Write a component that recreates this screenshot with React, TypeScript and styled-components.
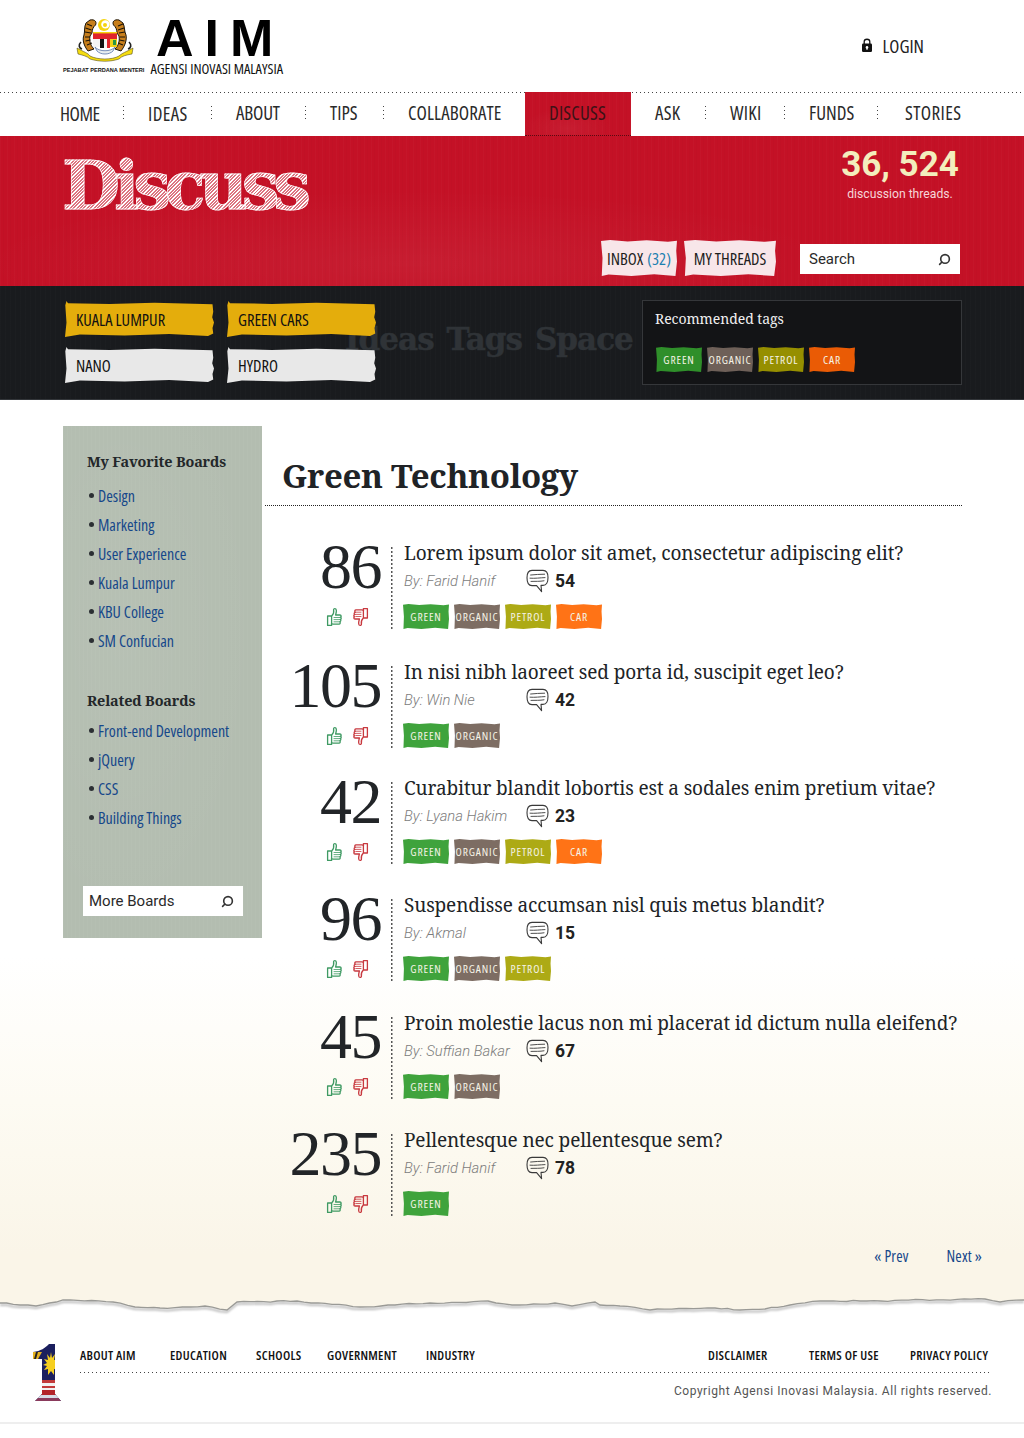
import React from 'react';
import styled, { createGlobalStyle, css } from 'styled-components';
import { Search as SearchGlyph } from 'lucide-react';

const narrow = `"Open Sans","Liberation Sans",sans-serif`;
const plain = `Roboto,"Liberation Sans",sans-serif`;
const serif = `"Noto Serif","Liberation Serif",serif`;

const Global = createGlobalStyle`
  html, body { margin: 0; padding: 0; background: #fff; }
  body { font-family: ${plain}; color: #222; }
  a { text-decoration: none; color: inherit; }
  ul { list-style: none; margin: 0; padding: 0; }
  * { box-sizing: border-box; }
`;

const condensed = css`
  font-family: ${narrow};
  font-stretch: 75%;
`;
const rough = css`
  clip-path: polygon(0 3%, 12% 0, 35% 4%, 60% 1%, 88% 5%, 100% 2%, 99% 30%, 100% 60%, 98% 100%, 70% 95%, 40% 100%, 10% 96%, 1% 100%, 2% 50%);
`;
const brush = css`
  clip-path: polygon(1% 0, 2% 6%, 30% 8%, 60% 5%, 99% 9%, 99.5% 30%, 98.8% 45%, 100% 60%, 99% 75%, 99.5% 90%, 96% 97%, 70% 92%, 40% 96%, 10% 93%, 3% 98%, 0 100%, 1% 60%, .5% 30%, .2% 12%);
`;
const paper = css`
  background-image:
    repeating-linear-gradient(90deg, rgba(255,255,255,.018) 0 1px, transparent 1px 3px, rgba(0,0,0,.015) 3px 4px, transparent 4px 7px),
    radial-gradient(ellipse 60% 70% at 40% 85%, rgba(255,255,255,.05), transparent 70%);
`;

const Page = styled.div`
  width: 1024px;
  height: 1438px;
  overflow: hidden;
  background: #fff;
`;

/* ---------- header ---------- */
const Header = styled.header`
  height: 92px;
  display: flex;
  justify-content: space-between;
  align-items: center;
  padding: 0 100px 0 63px;
`;
const Logo = styled.div`
  display: flex;
  flex-direction: column;
  width: 220px;
`;
const LogoTop = styled.div`
  display: flex;
  align-items: flex-start;
  height: 47px;
`;
const Crest = styled.svg`
  width: 58px;
  height: 44px;
  margin: 2px 0 0 13px;
  flex: none;
`;
const Wordmark = styled.div`
  font-family: "Liberation Sans", sans-serif;
  font-weight: 700;
  font-size: 52px;
  line-height: 46px;
  letter-spacing: 11px;
  color: #000;
  margin: -1px 0 0 22px;
  white-space: nowrap;
`;
const LogoBottom = styled.div`
  display: flex;
  align-items: center;
  justify-content: space-between;
  white-space: nowrap;
  color: #111;
`;
const Office = styled.span`
  font-family: "Liberation Sans", sans-serif;
  font-size: 5.6px;
  font-weight: 700;
`;
const Agency = styled.span`
  ${condensed};
  font-size: 14.4px;
  line-height: 16px;
  margin-top: -2px;
`;
const Login = styled.a`
  ${condensed};
  display: flex;
  align-items: center;
  gap: 11px;
  font-size: 18.5px;
  color: #222;
  margin-bottom: 2px;
`;
const Lock = styled.svg`
  width: 10px;
  height: 14px;
`;

/* ---------- nav ---------- */
const WideDots = styled.div`
  height: 1px;
  background-image: repeating-linear-gradient(90deg, #444 0 1px, transparent 1px 4px);
`;
const Nav = styled.nav`
  height: 43px;
  display: flex;
  align-items: center;
  padding: 0 0 4px 36px;
  white-space: nowrap;
`;
const NavLink = styled.a<{ $w: number; $low?: boolean; $track?: number; $start?: number }>`
  ${condensed};
  flex: none;
  width: ${p => p.$w}px;
  font-size: 19px;
  letter-spacing: ${p => p.$track ?? 0}px;
  color: #2a2a2a;
  padding: ${p => (p.$low ? '2px' : '0')} 0 0 ${p => p.$start ?? 24}px;
`;
const ActiveLink = styled.a`
  ${condensed};
  flex: none;
  width: 106px;
  font-size: 19px;
  letter-spacing: .2px;
  color: #3d1216;
  align-self: flex-start;
  margin-top: -1px;
  height: 44px;
  display: flex;
  align-items: center;
  padding: 0 0 2px 24px;
  background-color: #c41126;
  border-bottom: 1px dotted #5a0a12;
  ${paper};
`;
const NavSep = styled.span`
  width: 1px;
  height: 14px;
  flex: none;
  background-image: repeating-linear-gradient(180deg, #444 0 1px, transparent 1px 4px);
`;

/* ---------- hero ---------- */
const Hero = styled.section`
  height: 150px;
  background-color: #c41126;
  ${paper};
  display: flex;
  justify-content: space-between;
  padding: 0 64px 0 62px;
`;
const HeroTitle = styled.h1`
  margin: 10px 0 0;
  font-family: "DejaVu Serif", serif;
  font-weight: 700;
  font-size: 67px;
  line-height: 80px;
  letter-spacing: -6.2px;
  height: 80px;
  padding: 0 8px 0 0;
  color: transparent;
  -webkit-text-stroke: .8px rgba(255,255,255,.75);
  background-image: repeating-linear-gradient(135deg, #fff 0 1px, rgba(255,255,255,.42) 1px 2.4px);
  -webkit-background-clip: text;
  background-clip: text;
`;
const HeroRight = styled.div`
  display: flex;
  flex-direction: column;
  align-items: flex-end;
`;
const Stats = styled.div`
  width: 120px;
  display: flex;
  flex-direction: column;
  align-items: center;
  white-space: nowrap;
  height: 104px;
`;
const StatNumber = styled.div`
  font-family: ${plain};
  font-weight: 700;
  font-size: 35px;
  line-height: 40px;
  margin-top: 9px;
  color: #f3eebd;
`;
const StatLabel = styled.div`
  font-family: ${plain};
  font-size: 12.2px;
  line-height: 16px;
  margin-top: 1px;
  color: #f6d6d8;
`;
const Actions = styled.div`
  display: flex;
  align-items: center;
`;
const PaperButton = styled.a<{ $w: number }>`
  ${condensed};
  ${rough};
  width: ${p => p.$w}px;
  height: 36px;
  margin: 0 7px 2px 0;
  display: flex;
  align-items: center;
  justify-content: center;
  font-size: 16.5px;
  white-space: nowrap;
  color: #1d1d1d;
  background: #f8e6e9;
`;
const InboxCount = styled.span`
  color: #1c7fb0;
  margin-left: 4px;
`;
const SearchBox = styled.div<{ $left?: number }>`
  width: 160px;
  height: 30px;
  background: #fff;
  display: flex;
  align-items: center;
  justify-content: space-between;
  padding: 0 9px 0 ${p => p.$left ?? 9}px;
  margin-left: ${p => (p.$left ? 0 : 17)}px;
  font-family: ${plain};
  font-size: 15px;
  color: #2a2a2a;
`;
const SearchIcon = styled(SearchGlyph)`
  width: 13px;
  height: 13px;
  transform: scaleX(-1);
  color: #333;
`;

/* ---------- dark band ---------- */
const Band = styled.section`
  position: relative;
  height: 114px;
  background-color: #191b1e;
  background-image: repeating-linear-gradient(90deg, rgba(255,255,255,.012) 0 1px, transparent 1px 5px);
  border-bottom: 1px solid #33363a;
  display: flex;
  justify-content: space-between;
  padding: 14px 62px 0 65px;
`;
const Ghost = styled.div`
  position: absolute;
  left: 345px;
  top: 31px;
  font-family: "DejaVu Serif", serif;
  font-weight: 700;
  font-size: 31px;
  line-height: 44px;
  letter-spacing: -.95px;
  word-spacing: 3px;
  color: #2f3337;
  -webkit-text-stroke: .5px #2f3337;
  white-space: nowrap;
`;
const BrushGrid = styled.div`
  position: relative;
  display: grid;
  grid-template-columns: 149px 149px;
  grid-auto-rows: 36px;
  column-gap: 13px;
  row-gap: 10px;
  margin-top: 1px;
  height: 82px;
`;
const BrushTag = styled.a<{ $active?: boolean }>`
  ${condensed};
  ${brush};
  display: flex;
  align-items: center;
  padding-left: 11px;
  font-size: 16.5px;
  color: #111;
  background: ${p => (p.$active ? '#e4ad0c' : '#e8e8e8')};
`;
const RecBox = styled.div`
  position: relative;
  width: 320px;
  height: 85px;
  border: 1px solid #35373a;
  background: #131416;
  padding: 7px 13px 0 12px;
`;
const RecTitle = styled.div`
  font-family: ${serif};
  font-size: 14px;
  line-height: 22px;
  letter-spacing: -.05px;
  color: #f0f0f0;
`;
const tagColors: Record<string, [string, string]> = {
  GREEN: ['#3fa33c', '#2f8f2a'],
  ORGANIC: ['#7d6d63', '#6e6058'],
  PETROL: ['#adaa15', '#968f00'],
  CAR: ['#ff7316', '#ea5b05'],
};
const TagRow = styled.div<{ $top: number; $left: number }>`
  display: flex;
  gap: 5px;
  margin: ${p => p.$top}px 0 0 ${p => p.$left}px;
`;
const Tag = styled.a<{ $name: string; $dim?: boolean }>`
  ${condensed};
  ${rough};
  width: 46px;
  height: 25px;
  display: flex;
  align-items: center;
  justify-content: center;
  font-size: 11.5px;
  letter-spacing: .85px;
  color: #f5f3e6;
  white-space: nowrap;
  background: ${p => tagColors[p.$name][p.$dim ? 1 : 0]};
`;

/* ---------- main ---------- */
const Main = styled.main`
  height: 898px;
  padding: 26px 0 0 63px;
  display: flex;
  align-items: flex-start;
  background: linear-gradient(#fff 0, #fff 62%, #fdfbf3 78%, #faf5e8 95%);
`;
const Sidebar = styled.aside`
  width: 199px;
  height: 512px;
  flex: none;
  padding: 24px 19px 0 24px;
  background-color: #b3bdb0;
  background-image:
    repeating-linear-gradient(90deg, rgba(255,255,255,.03) 0 1px, transparent 1px 4px),
    radial-gradient(ellipse at 30% 40%, rgba(255,255,255,.05), transparent 70%);
  display: flex;
  flex-direction: column;
`;
const SideTitle = styled.h3<{ $top?: number }>`
  margin: ${p => p.$top ?? 0}px 0 0;
  font-family: ${serif};
  font-weight: 700;
  font-size: 14.4px;
  line-height: 24px;
  letter-spacing: -.15px;
  white-space: nowrap;
  color: #23272a;
`;
const SideList = styled.ul<{ $top?: number }>`
  margin-top: ${p => p.$top ?? 7}px;
`;
const SideItem = styled.li`
  ${condensed};
  height: 29px;
  display: flex;
  align-items: center;
  gap: 4px;
  font-size: 16px;
  color: #15478a;
  white-space: nowrap;
  &::before {
    content: '';
    width: 5px;
    height: 5px;
    margin-left: 2px;
    border-radius: 50%;
    background: #2b2f33;
  }
`;
const SideSearch = styled.div`
  margin: auto 0 22px -4px;
`;
const Content = styled.div`
  width: 697px;
  margin-left: 3px;
  flex: none;
`;
const Heading = styled.h2`
  margin: 0;
  height: 80px;
  padding: 26px 0 0 17px;
  border-bottom: 1px dotted #222;
  font-family: ${serif};
  font-weight: 700;
  font-size: 33px;
  line-height: 48px;
  letter-spacing: -.35px;
  color: #202326;
  white-space: nowrap;
`;
const Threads = styled.div`
  padding-top: 34px;
`;
const Thread = styled.article<{ $h: number }>`
  height: ${p => p.$h}px;
  display: grid;
  grid-template-columns: 126px 1fr;
  align-items: start;
`;
const VoteCol = styled.div`
  display: flex;
  flex-direction: column;
  align-items: flex-end;
`;
const Score = styled.div`
  font-family: "Liberation Serif", serif;
  font-size: 64px;
  line-height: 56px;
  letter-spacing: -1.5px;
  margin: -1px 10px 0 0;
  height: 68px;
  color: #222528;
  white-space: nowrap;
`;
const Votes = styled.div`
  display: flex;
  gap: 9px;
  padding-right: 22px;
`;
const Vote = styled.svg`
  width: 17px;
  height: 20px;
`;
const Body = styled.div`
  height: 90px;
  padding-left: 13px;
  background-image: repeating-linear-gradient(180deg, #555 0 2px, transparent 2px 4px);
  background-size: 1.5px 100%;
  background-repeat: no-repeat;
  background-position: 0 7px;
`;
const ThreadTitle = styled.h4`
  margin: 0;
  font-family: ${serif};
  font-weight: 400;
  font-size: 19px;
  line-height: 26px;
  letter-spacing: -.13px;
  white-space: nowrap;
  color: #202326;
`;
const Meta = styled.div`
  height: 26px;
  margin-top: 2px;
  display: flex;
  align-items: center;
`;
const Byline = styled.span`
  font-family: ${plain};
  width: 122px;
  flex: none;
  font-size: 14.8px;
  font-weight: 300;
  font-style: italic;
  color: #7c7c7c;
  white-space: nowrap;
`;
const Bubble = styled.svg`
  width: 23px;
  height: 24px;
  flex: none;
`;
const Count = styled.span`
  font-family: ${plain};
  font-weight: 700;
  font-size: 17.5px;
  margin-left: 6px;
  color: #222;
`;
const Pager = styled.div`
  display: flex;
  justify-content: flex-end;
  gap: 38px;
  margin: 2px -20px 0 0;
  ${condensed};
  font-size: 15.5px;
  line-height: 20px;
  letter-spacing: .15px;
  color: #15478a;
`;

/* ---------- torn edge and footer ---------- */
const Torn = styled.svg`
  display: block;
  width: 1024px;
  height: 20px;
`;
const Footer = styled.footer`
  height: 106px;
  display: flex;
  padding: 26px 32px 0 33px;
  border-bottom: 2px solid #eeeeee;
`;
const FlagOne = styled.svg`
  width: 28px;
  height: 57px;
  flex: none;
`;
const FootMain = styled.div`
  flex: 1;
  margin-left: 19px;
`;
const FootLinks = styled.div`
  height: 28px;
  padding-bottom: 6px;
  display: flex;
  align-items: center;
`;
const FootLink = styled.a<{ $w: number }>`
  ${condensed};
  flex: none;
  width: ${p => p.$w}px;
  font-size: 12.8px;
  font-weight: 600;
  letter-spacing: .3px;
  color: #111;
  white-space: nowrap;
`;
const Copyright = styled.div`
  margin: 11px 0 0;
  text-align: right;
  font-family: ${plain};
  font-size: 12px;
  letter-spacing: .55px;
  color: #555;
  white-space: nowrap;
`;

/* ---------- data ---------- */
const threads = [
  { h: 119, score: 86, title: 'Lorem ipsum dolor sit amet, consectetur adipiscing elit?', by: 'Farid Hanif', n: 54, tags: ['GREEN', 'ORGANIC', 'PETROL', 'CAR'] },
  { h: 116, score: 105, title: 'In nisi nibh laoreet sed porta id, suscipit eget leo?', by: 'Win Nie', n: 42, tags: ['GREEN', 'ORGANIC'] },
  { h: 117, score: 42, title: 'Curabitur blandit lobortis est a sodales enim pretium vitae?', by: 'Lyana Hakim', n: 23, tags: ['GREEN', 'ORGANIC', 'PETROL', 'CAR'] },
  { h: 118, score: 96, title: 'Suspendisse accumsan nisl quis metus blandit?', by: 'Akmal', n: 15, tags: ['GREEN', 'ORGANIC', 'PETROL'] },
  { h: 117, score: 45, title: 'Proin molestie lacus non mi placerat id dictum nulla eleifend?', by: 'Suffian Bakar', n: 67, tags: ['GREEN', 'ORGANIC'] },
  { h: 117, score: 235, title: 'Pellentesque nec pellentesque sem?', by: 'Farid Hanif', n: 78, tags: ['GREEN'] },
];
const favourites = ['Design', 'Marketing', 'User Experience', 'Kuala Lumpur', 'KBU College', 'SM Confucian'];
const related = ['Front-end Development', 'jQuery', 'CSS', 'Building Things'];

const edgePts: [number, number][] = [[0,5],[20,7],[36,8],[63,2],[113,4],[135,9],[160,10],[205,8],[227,12],[237,4],[297,3],[360,9],[430,5],[488,3],[512,7],[555,5],[572,8],[595,4],[600,7],[620,8],[650,12],[715,10],[740,12],[765,11],[790,7],[820,3],[860,3],[985,1],[1000,4],[1024,2]];
const edgeLine = (() => {
  const out: string[] = [];
  edgePts.forEach(([x, y], i) => {
    if (i) {
      const [px, py] = edgePts[i - 1];
      const steps = Math.max(1, Math.round((x - px) / 7));
      for (let s = 1; s < steps; s++) {
        const t = s / steps;
        const xx = px + (x - px) * t;
        const yy = py + (y - py) * t + Math.sin(xx * 1.7) * 0.45 + Math.sin(xx * 0.61) * 0.35;
        out.push(`${xx.toFixed(1)} ${yy.toFixed(1)}`);
      }
    }
    out.push(`${x} ${y}`);
  });
  return 'M' + out.join('L');
})();

const ThumbUp = () => (
  <Vote viewBox="0 0 17 20" fill="none" stroke="#3f9a63" strokeWidth="1.3" strokeLinejoin="round" strokeLinecap="round">
    <path d="M6 8.5 C7.5 7 8 5 7.6 2.8 C7.5 1.2 10 1 10.3 3 C10.6 5 10 6.5 9.6 8 H14 C15.4 8 15.6 10 14.4 10.2 C15.6 10.6 15.4 12.4 14.2 12.4 C15.2 13 15 14.6 13.8 14.7 C14.6 15.4 14.2 17.2 13 17.2 H7 C6 17.2 5.8 16.6 5.5 16.4" />
    <path d="M1.6 9 H5.6 V18.4 H1.6 Z" />
    <path d="M8 10.5 H14 M8 12.6 H13.6 M8 14.8 H13.2" strokeWidth=".8" />
  </Vote>
);
const ThumbDown = () => (
  <Vote viewBox="0 0 17 20" fill="none" stroke="#c8393f" strokeWidth="1.3" strokeLinejoin="round" strokeLinecap="round">
    <path d="M11 11.5 C9.5 13 9 15 9.4 17.2 C9.5 18.8 7 19 6.7 17 C6.4 15 7 13.5 7.4 12 H3 C1.6 12 1.4 10 2.6 9.8 C1.4 9.4 1.6 7.6 2.8 7.6 C1.8 7 2 5.4 3.2 5.3 C2.4 4.6 2.8 2.8 4 2.8 H10 C11 2.8 11.2 3.4 11.5 3.6" />
    <path d="M11.4 1.6 H15.4 V11 H11.4 Z" />
    <path d="M3 5.2 H9 M3.4 7.4 H9 M3.8 9.5 H9" strokeWidth=".8" />
  </Vote>
);
const CommentBubble = () => (
  <Bubble viewBox="0 0 23 24" fill="none" stroke="#3a3a3a" strokeWidth="1.1" strokeLinecap="round" strokeLinejoin="round">
    <path d="M6 1.4 H17 C20.4 1.4 22 3.6 22 8.4 C22 13.4 20.4 16.4 17 16.4 H15 L15.6 22.6 L10.6 16.6 H6 C2.6 16.600 1 14 1 8.8 C1 3.6 2.6 1.4 6 1.4 Z" />
    <path d="M4.6 6 C9 5.4 14 5.400 18.6 5.2 M4 9.200 C9 9.600 14 8.800 19 8.600 M5 12.400 C9 12.200 14 12.600 18 11.800" strokeWidth=".9" />
  </Bubble>
);

export default function App() {
  return (
    <Page>
      <Global />
      <Header>
        <Logo>
          <LogoTop>
            <Crest viewBox="0 0 58 44">
              <circle cx="28" cy="7" r="6" fill="#f4d40d" />
              <circle cx="29.4" cy="6.4" r="4.2" fill="#fff" />
              <circle cx="29" cy="7" r="2" fill="#f4d40d" />
              <g fill="#c87f1c" stroke="#1b1408" strokeWidth="1">
                <path d="M14 2 C19 1 21 4 19.5 7 C17 9 16 12 16 15 L14 18 C13 24 15 28 18 31 L12 33 C8 28 6 22 8 17 C9 13 8 9 10 5 Z" />
                <path d="M43 2 C38 1 36 4 37.500 7 C40 9 41 12 41 15 L43 18 C44 24 42 28 39 31 L45 33 C49 28 51 22 50 17 C48 13 49 9 47 5 Z" />
              </g>
              <path d="M11 6 l5 2 M9.500 10 l6 2 M9 14 l6 1 M9 19 l5 0 M9.500 23 l5 -1 M11 27 l5 -2 M47 6 l-5 2 M48 10 l-6 2 M49 14 l-6 1 M49 19 l-5 0 M48.500 23 l-5 -1 M47 27 l-5 -2" stroke="#1b1408" strokeWidth="1.1" fill="none" />
              <path d="M5 24 C2 27 3 30 6 31 M53 24 C56 27 55 30 52 31" fill="none" stroke="#222" strokeWidth="1.6" />
              <rect x="17" y="14" width="24" height="7" fill="#e0242c" />
              <path d="M17 14 h24 v1.400 h-24 Z" fill="#f4d40d" />
              <rect x="17" y="21" width="7" height="8" fill="#f4f4f4" />
              <rect x="24" y="21" width="4" height="9" fill="#111" />
              <rect x="28" y="21" width="3" height="9" fill="#f4f4f4" />
              <rect x="31" y="21" width="3" height="9" fill="#e0242c" />
              <rect x="34" y="21" width="7" height="8" fill="#f2d018" />
              <path d="M37 22 l3 0 v5 h-3 Z" fill="#2a9445" />
              <path d="M19 29 C23 34 35 34 39 29 L37 33 C33 37 25 37 21 33 Z" fill="#e8eef0" stroke="#5572a8" strokeWidth=".8" />
              <path d="M1 30 C8 34 12 35 14 38 C22 42 36 42 43 38 C46 35 50 34 57 30 L56 36 C50 37 46 38 43 41 C34 44 24 44 14 41 C11 38 6 37 2 36 Z" fill="#f4dc10" stroke="#3a3208" strokeWidth=".5" />
            </Crest>
            <Wordmark>AIM</Wordmark>
          </LogoTop>
          <LogoBottom>
            <Office>PEJABAT PERDANA MENTERI</Office>
            <Agency>AGENSI INOVASI MALAYSIA</Agency>
          </LogoBottom>
        </Logo>
        <Login href="#">
          <Lock viewBox="0 0 10 14">
            <path d="M2.2 6 V3.8 C2.2 0.4 7.8 0.4 7.8 3.8 V6" fill="none" stroke="#111" strokeWidth="1.3" />
            <rect x="0" y="5.6" width="10" height="8.4" rx="1.2" fill="#111" />
            <circle cx="5" cy="9.4" r="1.3" fill="#fff" />
            <rect x="4.4" y="9.4" width="1.2" height="2.4" fill="#fff" />
          </Lock>
          LOGIN
        </Login>
      </Header>

      <WideDots />
      <Nav>
        <NavLink href="#" $w={87} $low $track={-.5}>HOME</NavLink><NavSep />
        <NavLink href="#" $w={87} $low $track={.4}>IDEAS</NavLink><NavSep />
        <NavLink href="#" $w={93} $track={-.2}>ABOUT</NavLink><NavSep />
        <NavLink href="#" $w={77}>TIPS</NavLink><NavSep />
        <NavLink href="#" $w={141} $track={.1}>COLLABORATE</NavLink>
        <ActiveLink href="#">DISCUSS</ActiveLink>
        <NavLink href="#" $w={74} $track={.3}>ASK</NavLink><NavSep />
        <NavLink href="#" $w={78} $track={.3}>WIKI</NavLink><NavSep />
        <NavLink href="#" $w={92}>FUNDS</NavLink><NavSep />
        <NavLink href="#" $w={100} $start={27} $track={.4}>STORIES</NavLink>
      </Nav>

      <Hero>
        <HeroTitle>Discuss</HeroTitle>
        <HeroRight>
          <Stats>
            <StatNumber>36, 524</StatNumber>
            <StatLabel>discussion threads.</StatLabel>
          </Stats>
          <Actions>
            <PaperButton href="#" $w={76}>INBOX<InboxCount>(32)</InboxCount></PaperButton>
            <PaperButton href="#" $w={92}>MY THREADS</PaperButton>
            <SearchBox>Search<SearchIcon strokeWidth={3} /></SearchBox>
          </Actions>
        </HeroRight>
      </Hero>

      <Band>
        <Ghost>Ideas Tags Space</Ghost>
        <BrushGrid>
          <BrushTag href="#" $active>KUALA LUMPUR</BrushTag>
          <BrushTag href="#" $active>GREEN CARS</BrushTag>
          <BrushTag href="#">NANO</BrushTag>
          <BrushTag href="#">HYDRO</BrushTag>
        </BrushGrid>
        <RecBox>
          <RecTitle>Recommended tags</RecTitle>
          <TagRow $top={17} $left={1}>
            {['GREEN', 'ORGANIC', 'PETROL', 'CAR'].map(t => <Tag href="#" key={t} $name={t} $dim>{t}</Tag>)}
          </TagRow>
        </RecBox>
      </Band>

      <Main>
        <Sidebar>
          <SideTitle>My Favorite Boards</SideTitle>
          <SideList>
            {favourites.map(f => <SideItem key={f}>{f}</SideItem>)}
          </SideList>
          <SideTitle $top={34}>Related Boards</SideTitle>
          <SideList $top={3}>
            {related.map(f => <SideItem key={f}>{f}</SideItem>)}
          </SideList>
          <SideSearch>
            <SearchBox $left={6}>More Boards<SearchIcon strokeWidth={3} /></SearchBox>
          </SideSearch>
        </Sidebar>
        <Content>
          <Heading>Green Technology</Heading>
          <Threads>
            {threads.map(t => (
              <Thread key={t.title} $h={t.h}>
                <VoteCol>
                  <Score>{t.score}</Score>
                  <Votes><ThumbUp /><ThumbDown /></Votes>
                </VoteCol>
                <Body>
                  <ThreadTitle>{t.title}</ThreadTitle>
                  <Meta>
                    <Byline>By: {t.by}</Byline>
                    <CommentBubble />
                    <Count>{t.n}</Count>
                  </Meta>
                  <TagRow $top={10} $left={-1}>
                    {t.tags.map(n => <Tag href="#" key={n} $name={n}>{n}</Tag>)}
                  </TagRow>
                </Body>
              </Thread>
            ))}
          </Threads>
          <Pager>
            <a href="#">« Prev</a>
            <a href="#">Next »</a>
          </Pager>
        </Content>
      </Main>

      <Torn viewBox="0 0 1024 20">
        <defs>
          <filter id="edgeBlur" x="-1%" y="-50%" width="102%" height="200%">
            <feGaussianBlur stdDeviation="1.1" />
          </filter>
        </defs>
        <path d={edgeLine} transform="translate(0 2)" fill="none" stroke="#000" strokeOpacity=".28" strokeWidth="2" filter="url(#edgeBlur)" />
        <path d={`${edgeLine}L1024 0L0 0Z`} fill="#faf5e8" />
        <path d={edgeLine} fill="none" stroke="#9a9a96" strokeWidth="1.3" />
      </Torn>

      <Footer>
        <FlagOne viewBox="0 0 28 57">
          <defs>
            <clipPath id="oneShape">
              <path d="M16 0 H22 V50 L28 57 H2 L9 50 V15 H0 V8 C8 7 12 4 16 0 Z" />
            </clipPath>
          </defs>
          <g clipPath="url(#oneShape)">
            <rect width="28" height="57" fill="#1b1f5e" />
            <path d="M0 8 H9 L5 15 H0 Z" fill="#e3b021" />
            <path d="M3 8 h2 l-2 7 h-2 Z" fill="#222" />
            <path d="M18 8 L19 14 L22 10 L21 16 L25 15 L22 19 L26 21 L22 22 L25 26 L21 25 L21 31 L18 27 L15 31 L15 25 L11 26 L14 22 L10 21 L14 19 L11 15 L15 16 L14 10 L17 14 Z" fill="#f6cf1f" />
            <rect y="36" width="28" height="3" fill="#c23a3a" />
            <rect y="39" width="28" height="3" fill="#f2f2f2" />
            <rect y="42" width="28" height="2" fill="#c23a3a" />
            <rect y="44" width="28" height="2" fill="#f2f2f2" />
            <rect y="46" width="28" height="5" fill="#b3242a" />
            <rect y="51" width="28" height="3" fill="#d7dbe6" />
            <rect y="54" width="28" height="3" fill="#8a3a5c" />
          </g>
        </FlagOne>
        <FootMain>
          <FootLinks>
            <FootLink href="#" $w={90}>ABOUT AIM</FootLink>
            <FootLink href="#" $w={86}>EDUCATION</FootLink>
            <FootLink href="#" $w={71}>SCHOOLS</FootLink>
            <FootLink href="#" $w={99}>GOVERNMENT</FootLink>
            <FootLink href="#" $w={282}>INDUSTRY</FootLink>
            <FootLink href="#" $w={101}>DISCLAIMER</FootLink>
            <FootLink href="#" $w={101}>TERMS OF USE</FootLink>
            <FootLink href="#" $w={80}>PRIVACY POLICY</FootLink>
          </FootLinks>
          <WideDots />
          <Copyright>Copyright Agensi Inovasi Malaysia. All rights reserved.</Copyright>
        </FootMain>
      </Footer>
    </Page>
  );
}
